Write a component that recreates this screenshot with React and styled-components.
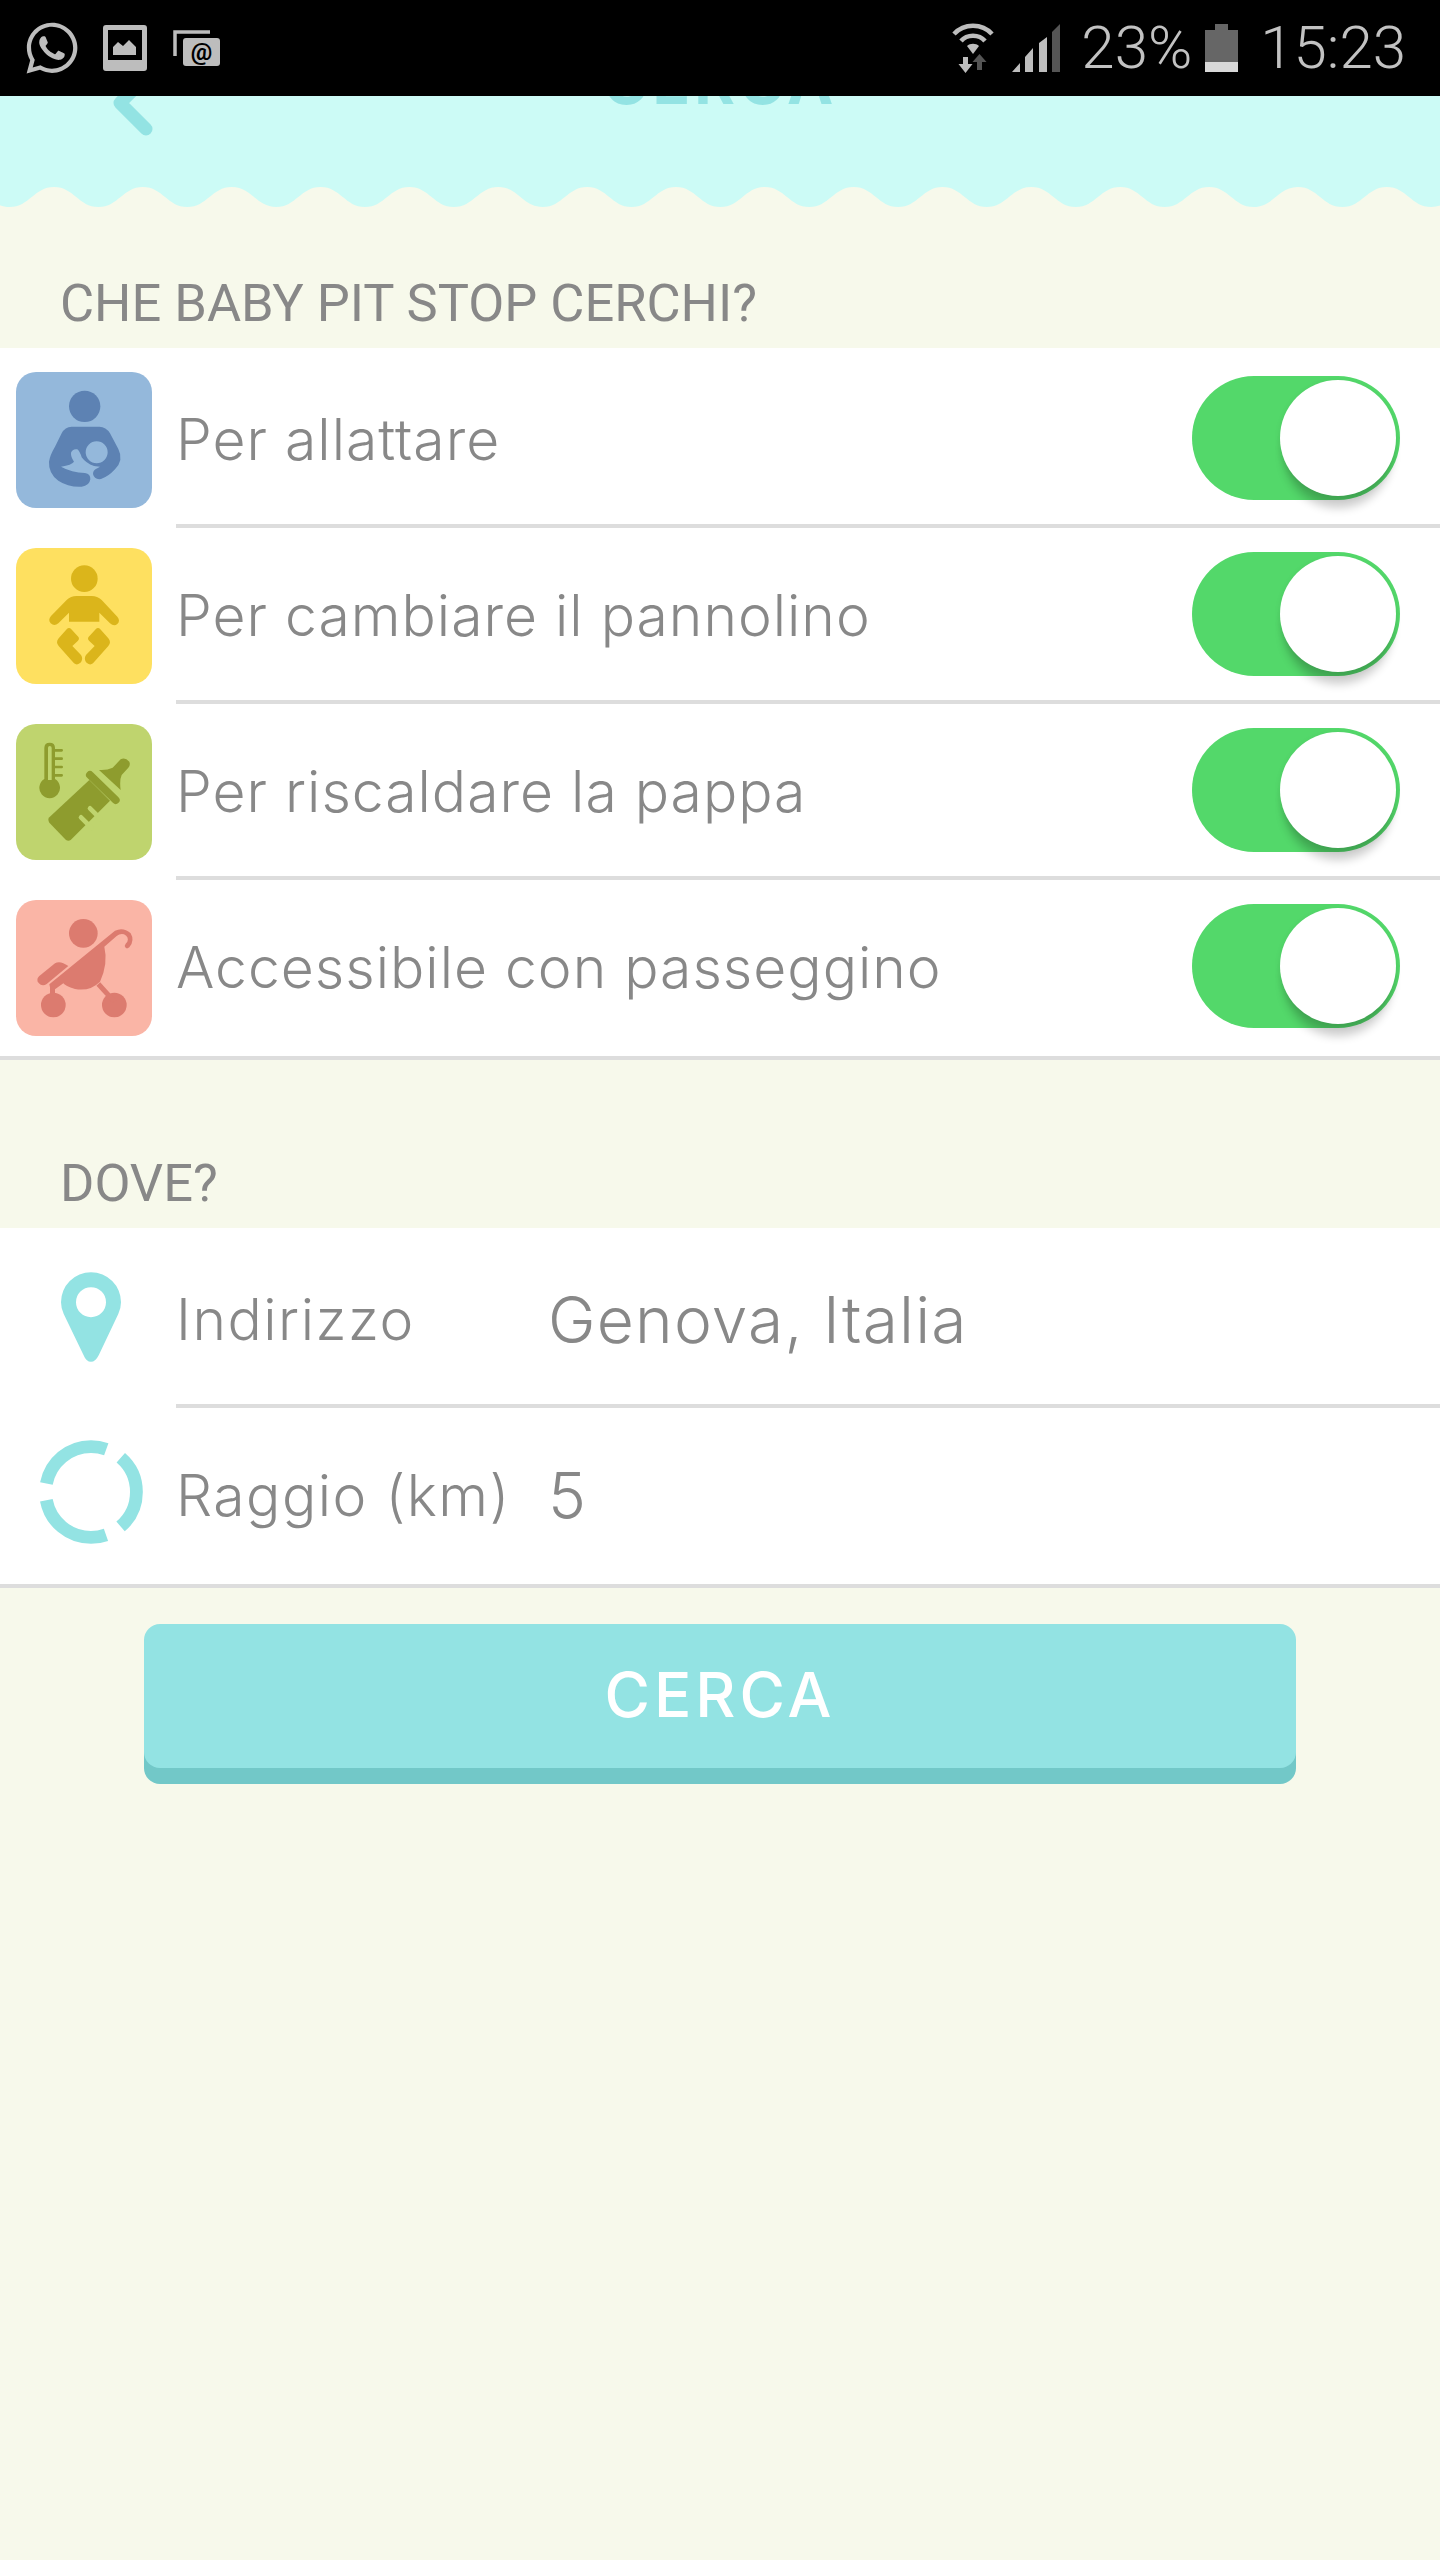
import React from 'react';
import styled, { createGlobalStyle } from 'styled-components';
import { FaWhatsapp } from 'react-icons/fa';

const GlobalStyle = createGlobalStyle`
  html, body {
    margin: 0;
    padding: 0;
    background: #f7f9eb;
    font-family: "Inter", "Liberation Sans", sans-serif;
  }
`;

const Page = styled.div`
  width: 1440px;
  height: 2560px;
  overflow: hidden;
  background: #f7f9eb;
`;

const StatusBar = styled.div`
  height: 96px;
  background: #000;
  color: #c2c2c2;
  display: flex;
  align-items: center;
  justify-content: space-between;
  padding: 0 34px 0 23px;
  position: relative;
  z-index: 2;
`;

const StatusGroup = styled.div`
  display: flex;
  align-items: center;
  gap: ${props => props.gap || 0}px;
`;

const ChatIcon = styled(FaWhatsapp)`
  margin-right: -4px;
`;

const StatusText = styled.span`
  font-family: "Roboto", sans-serif;
  font-weight: 300;
  font-size: 60px;
  line-height: 96px;
  margin: 0 ${props => props.after || 0}px 0 ${props => props.before || 0}px;
`;

const SignalSlot = styled.div`
  display: flex;
  margin-left: 18px;
`;

const Header = styled.header`
  height: 112px;
  background: #ccfbf6;
  display: flex;
  flex-direction: column;
  justify-content: space-between;
  overflow: hidden;
`;

const HeaderRow = styled.div`
  display: grid;
  grid-template-columns: 1fr auto 1fr;
  align-items: center;
  height: 94px;
  margin-top: -46px;
`;

const BackIcon = styled.svg`
  width: 48px;
  height: 88px;
  margin-left: 110px;
  display: block;
`;

const HeaderTitle = styled.h1`
  margin: 0 0 41px;
  font-size: 62px;
  line-height: 64px;
  font-weight: 700;
  letter-spacing: 4px;
  color: #93e3e3;
`;

const Wave = styled.svg`
  display: block;
  width: 1440px;
  height: 24px;
  flex-shrink: 0;
`;

const SectionLabel = styled.div`
  height: ${props => props.height}px;
  box-sizing: border-box;
  display: flex;
  align-items: flex-end;
  padding: 0 0 ${props => props.bottom}px 60px;
  font-family: "Roboto", sans-serif;
  font-size: 52.4px;
  line-height: 60px;
  color: #888;
`;

const Group = styled.section`
  background: #fff;
  padding-top: 4px;
  border-bottom: 4px solid #ddd;
`;

const Row = styled.div`
  display: flex;
  height: 176px;
`;

const Lead = styled.div`
  width: 176px;
  flex-shrink: 0;
  display: flex;
  align-items: flex-start;
  justify-content: ${props => (props.center ? 'center' : 'flex-start')};
  padding: ${props => (props.center ? '0 0 0 6px' : '20px 0 0 16px')};
  box-sizing: border-box;
`;

const RowBody = styled.div`
  flex: 1;
  display: flex;
  align-items: center;
  box-sizing: border-box;
  padding: 4px 40px ${props => (props.last ? 4 : 0)}px 0;
  border-bottom: ${props => (props.last ? 'none' : '4px solid #ddd')};
`;

const IconTile = styled.div`
  width: 136px;
  height: 136px;
  border-radius: 20px;
  background: ${props => props.color};
  fill: ${props => props.ink};
  color: ${props => props.ink};
  svg {
    display: block;
    width: 136px;
    height: 136px;
  }
`;

const RowLabel = styled.span`
  flex: 1;
  font-weight: 300;
  font-size: 57px;
  line-height: 64px;
  letter-spacing: 1px;
  color: #888;
`;

const FieldLabel = styled(RowLabel)`
  flex: none;
  width: 372px;
  letter-spacing: 1.5px;
`;

const FieldValue = styled.span`
  font-weight: 300;
  font-size: 64px;
  line-height: 64px;
  letter-spacing: 1.2px;
  color: #888;
`;

const Track = styled.div`
  width: 208px;
  height: 124px;
  margin-bottom: 4px;
  border-radius: 62px;
  background: #53d86a;
  display: flex;
  align-items: center;
  justify-content: flex-end;
  padding-right: 4px;
  box-sizing: border-box;
`;

const Knob = styled.div`
  width: 116px;
  height: 116px;
  border-radius: 50%;
  background: #fff;
  box-shadow: 0 16px 10px -4px rgba(0, 0, 0, 0.2), 0 2px 6px rgba(0, 0, 0, 0.08);
`;

const PinIcon = styled.svg`
  width: 60px;
  height: 90px;
  margin-top: 40px;
`;

const RingIcon = styled.svg`
  width: 104px;
  height: 104px;
  margin-top: 32px;
`;

const ButtonWrap = styled.div`
  padding: 36px 144px 0;
`;

const SearchButton = styled.button`
  width: 100%;
  height: 144px;
  padding: 0 0 3px;
  border: none;
  border-radius: 16px;
  background: #93e3e3;
  box-shadow: 0 16px 0 #72c8c8;
  color: #fff;
  font-family: inherit;
  font-size: 62px;
  font-weight: 500;
  letter-spacing: 4px;
`;

// scalloped edge under the header, cream over the cyan
const wavePath = () => {
  const period = 88.85;
  const half = period / 2;
  let x = 9.6 - period;
  let d = `M${x} 24 L${x} 23`;
  for (let i = 0; i < 19; i++) {
    d += ` C${x + half * 0.45} 23 ${x + half * 0.55} 3 ${x + half} 3`;
    d += ` C${x + half * 1.45} 3 ${x + half * 1.55} 23 ${x + period} 23`;
    x += period;
  }
  return `${d} L${x} 24 Z`;
};

const GalleryIcon = () => (
  <svg width="44" height="46" viewBox="0 0 44 46">
    <path
      fill="#bdbdbd"
      fillRule="evenodd"
      d="M3 0H41Q44 0 44 3V43Q44 46 41 46H3Q0 46 0 43V3Q0 0 3 0ZM5 5V35H39V5ZM10 30V22L15 17L20 21L26 15L33 22V30Z"
    />
  </svg>
);

const MailIcon = () => (
  <svg width="47" height="36" viewBox="0 0 47 36">
    <path fill="none" stroke="#bdbdbd" strokeWidth="3.5" d="M2 26V2H37" />
    <rect x="10" y="8" width="37" height="28" rx="3" fill="#bdbdbd" />
    <text x="28.5" y="30" textAnchor="middle" fontSize="24" fontWeight="700" fontFamily="Roboto, sans-serif" fill="#000">@</text>
  </svg>
);

const WifiIcon = () => (
  <svg width="42" height="50" viewBox="0 0 42 50">
    <g fill="none" stroke="#bdbdbd" strokeWidth="4.5">
      <path d="M2 11C12 0 30 0 40 11" />
      <path d="M9 18C15 11 27 11 33 18" />
    </g>
    <path fill="#bdbdbd" d="M15 23C18 20 24 20 27 23L21 31Z" />
    <path fill="#bdbdbd" d="M11 34H16V41H20.5L13.5 50L6.500 41H11Z" />
    <path fill="#555" d="M25 47H30V39H34.500L27.500 31L20.500 39H25Z" />
  </svg>
);

const SignalIcon = () => (
  <svg width="48" height="48" viewBox="0 0 48 48">
    <path fill="#bdbdbd" d="M0 48L8 39V48ZM13 48V33L21 24V48ZM27 48V19L35 13V48Z" />
    <path fill="#555" d="M40 48V8L48 0V48Z" />
  </svg>
);

const BatteryIcon = () => (
  <svg width="33" height="48" viewBox="0 0 33 48">
    <path fill="#666" d="M10 0H23V6H33V38H0V6H10Z" />
    <rect y="38" width="33" height="10" fill="#d8d8d8" />
  </svg>
);

const NursingGlyph = () => (
  <svg viewBox="48 66 408 408">
    <circle cx="254" cy="169" r="47" />
    <path
      fillRule="evenodd"
      d="M215 230H298Q318 230 330 250L355 297Q372 330 345 358Q325 380 303 387Q283 390 279 372Q279 360 292 355L300 350L282 348Q258 340 245 322Q240 305 232 298Q218 295 213 308Q212 320 222 335Q215 345 183 350Q215 368 255 369Q272 372 271 388Q268 408 245 410Q205 412 175 392Q145 370 147 335Q150 315 165 290L185 250Q195 230 215 230ZM323 307A33 33 0 1 0 257 307A33 33 0 1 0 323 307Z"
    />
  </svg>
);

const diaperLeg = 'M200 838Q207 830 214 838L236 862Q239 868 234 872L217 888L243 915Q250 925 243 937Q232 948 222 940L176 888Q166 877 176 865Z';

const DiaperGlyph = () => (
  <svg viewBox="48 594 408 408">
    <circle cx="253" cy="686" r="40" />
    <path d="M230 738H275Q292 738 305 750L352 800Q362 812 352 822Q342 830 330 820L298 788V815H207V788L175 820Q163 830 152 820Q143 810 153 798L200 750Q212 738 230 738Z" />
    <path d={diaperLeg} />
    <path d={diaperLeg} transform="translate(501 0) scale(-1 1)" />
  </svg>
);

const BottleGlyph = ({ paper, ink }) => (
  <svg viewBox="48 72 408 408">
    <path fillRule="evenodd" d="M149 128Q165 128 165 144V237A31 31 0 1 1 133 237V144Q133 128 149 128ZM149 138Q144 138 144 144V240H155V144Q155 138 149 138Z" />
    <g stroke={ink} strokeWidth="8" strokeLinecap="round" fill="none">
      <path d="M165 151H185M165 176H185M165 201H185M165 226H185" />
    </g>
    <path d="M268 240L330 302L212 420Q205 425 198 420L148 368Q142 358 148 352Z" />
    <path d="M270 225L347 300" stroke={ink} strokeWidth="24" strokeLinecap="round" fill="none" />
    <path d="M297 210Q320 212 338 203L362 178Q375 170 388 185Q392 195 385 203L365 225Q358 240 362 270Z" />
    <g stroke={paper} strokeWidth="14" strokeLinecap="round" fill="none">
      <path d="M270 325L302 357" />
      <path d="M243 352L275 384" />
    </g>
  </svg>
);

const StrollerGlyph = ({ ink }) => (
  <svg viewBox="48 600 408 408">
    <circle cx="250" cy="700" r="43" />
    <path d="M148 853L345 692Q370 680 392 700Q405 722 388 742Q378 750 374 738Q376 730 382 725Q388 712 372 703Q360 700 350 708L313 740Q325 790 300 845Q270 875 225 867Q195 858 190 850L165 868V885H150V862Z" />
    <path d="M118 828L165 790Q180 780 205 798L140 852Q125 862 113 845Q110 835 118 828Z" />
    <circle cx="160" cy="915" r="37" />
    <circle cx="343" cy="915" r="37" />
    <path d="M295 852L343 905" stroke={ink} strokeWidth="15" fill="none" />
  </svg>
);

const options = [
  { label: 'Per allattare', color: '#94b8db', ink: '#5d82b3', Glyph: NursingGlyph },
  { label: 'Per cambiare il pannolino', color: '#fee060', ink: '#dbb51b', Glyph: DiaperGlyph },
  { label: 'Per riscaldare la pappa', color: '#bfd46e', ink: '#8e9c2e', Glyph: BottleGlyph },
  { label: 'Accessibile con passeggino', color: '#fab5a6', ink: '#dc7b6f', Glyph: StrollerGlyph },
];

const App = () => (
  <Page>
    <GlobalStyle />
    <StatusBar>
      <StatusGroup gap={26}>
        <ChatIcon size={58} color="#bdbdbd" />
        <GalleryIcon />
        <MailIcon />
      </StatusGroup>
      <StatusGroup>
        <WifiIcon />
        <SignalSlot>
          <SignalIcon />
        </SignalSlot>
        <StatusText before={21} after={13}>23%</StatusText>
        <BatteryIcon />
        <StatusText before={22}>15:23</StatusText>
      </StatusGroup>
    </StatusBar>

    <Header>
      <HeaderRow>
        <BackIcon viewBox="0 0 48 88">
          <path d="M36 18L10 44L36 70" fill="none" stroke="#93e3e3" strokeWidth="13" strokeLinecap="round" strokeLinejoin="round" />
        </BackIcon>
        <HeaderTitle>CERCA</HeaderTitle>
        <div />
      </HeaderRow>
      <Wave viewBox="0 0 1440 24">
        <path d={wavePath()} fill="#f7f9eb" />
      </Wave>
    </Header>

    <SectionLabel height={140} bottom={15}>CHE BABY PIT STOP CERCHI?</SectionLabel>
    <Group>
      {options.map(({ label, color, ink, Glyph }, index) => (
        <Row key={label}>
          <Lead>
            <IconTile color={color} ink={ink}>
              <Glyph paper={color} ink={ink} />
            </IconTile>
          </Lead>
          <RowBody last={index === options.length - 1}>
            <RowLabel>{label}</RowLabel>
            <Track>
              <Knob />
            </Track>
          </RowBody>
        </Row>
      ))}
    </Group>

    <SectionLabel height={168} bottom={15}>DOVE?</SectionLabel>
    <Group>
      <Row>
        <Lead center>
          <PinIcon viewBox="184 157 176 263">
            <path
              fill="#93e3e3"
              fillRule="evenodd"
              d="M272 157A88 88 0 0 1 360 245Q360 262 352 280L295 400Q285 420 272 420Q258 420 250 400L192 280Q184 262 184 245A88 88 0 0 1 272 157ZM316 245A44 44 0 1 0 228 245A44 44 0 1 0 316 245Z"
            />
          </PinIcon>
        </Lead>
        <RowBody>
          <FieldLabel>Indirizzo</FieldLabel>
          <FieldValue>Genova, Italia</FieldValue>
        </RowBody>
      </Row>
      <Row>
        <Lead center>
          <RingIcon viewBox="0 0 308 308">
            <circle cx="154" cy="154" r="134.500" fill="none" stroke="#93e3e3" strokeWidth="38" strokeDasharray="231.600 50" strokeDashoffset="-165.700" />
          </RingIcon>
        </Lead>
        <RowBody last>
          <FieldLabel>Raggio (km)</FieldLabel>
          <FieldValue>5</FieldValue>
        </RowBody>
      </Row>
    </Group>

    <ButtonWrap>
      <SearchButton>CERCA</SearchButton>
    </ButtonWrap>
  </Page>
);

export default App;
